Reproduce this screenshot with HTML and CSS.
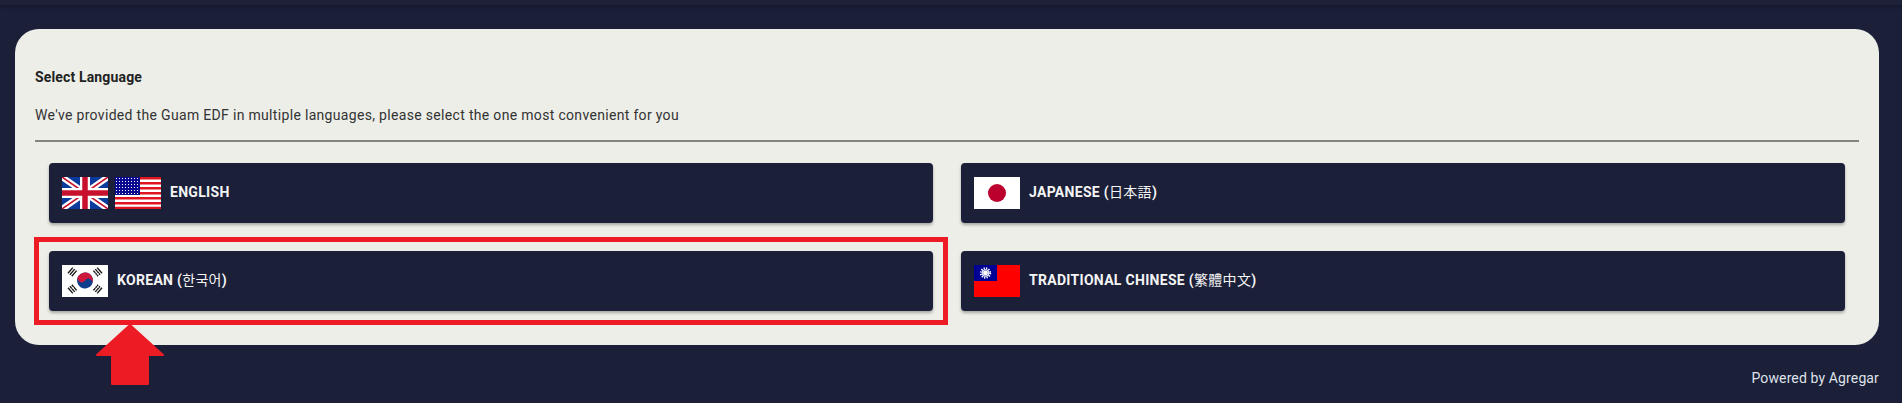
FILE: index.html
```html
<!DOCTYPE html>
<html lang="en">
<head>
    <meta charset="UTF-8">
    <meta name="viewport" content="width=device-width, initial-scale=1.0">
    <title>Select Language</title>
    <link rel="stylesheet" href="styles.css">
</head>
<body>
    <div class="topbar"></div>

    <div class="card">
        <h2 class="card-title">Select Language</h2>
        <p class="card-text">We've provided the Guam EDF in multiple languages, please select the one most convenient for you</p>
        <hr class="divider">

        <div class="language-grid">
            <a class="language-button" href="#">
                <svg class="flag" viewBox="0 0 46 32" preserveAspectRatio="none">
                    <rect width="46" height="32" fill="#0a3a9c"/>
                    <path d="M0 0L46 32M46 0L0 32" stroke="#fff" stroke-width="6"/>
                    <path d="M0 0L46 32M46 0L0 32" stroke="#c8102e" stroke-width="1.6"/>
                    <path d="M23 0V32M0 16H46" stroke="#fff" stroke-width="10"/>
                    <path d="M23 0V32M0 16H46" stroke="#c8102e" stroke-width="5.5"/>
                </svg>
                <svg class="flag" viewBox="0 0 46 32" preserveAspectRatio="none">
                    <defs>
                        <pattern id="stars" width="3" height="3" patternUnits="userSpaceOnUse">
                            <rect width="1" height="1" x="1" y="1" fill="#fff"/>
                        </pattern>
                    </defs>
                    <rect width="46" height="32" fill="#fff"/>
                    <path d="M0 1.2H46M0 6.2H46M0 11.2H46M0 16.2H46M0 21.2H46M0 26.2H46M0 31H46" stroke="#e0141e" stroke-width="2.5"/>
                    <rect width="25" height="18" fill="#0a0a90"/>
                    <rect width="25" height="18" fill="url(#stars)"/>
                </svg>
                <span>ENGLISH</span>
            </a>
            <a class="language-button" href="#">
                <svg class="flag" viewBox="0 0 46 32" preserveAspectRatio="none">
                    <rect width="46" height="32" fill="#fff"/>
                    <circle cx="23" cy="16" r="9" fill="#bc002d"/>
                </svg>
                <span>JAPANESE (<span class="native" lang="ja">日本語</span>)</span>
            </a>
            <a class="language-button" href="#">
                <svg class="flag" viewBox="0 0 46 32" preserveAspectRatio="none">
                    <rect width="46" height="32" fill="#fff"/>
                    <g transform="rotate(33.7 23 15.500)">
                        <circle cx="23" cy="15.500" r="8" fill="#0f3f8c"/>
                        <path d="M15 15.500A4 4 0 0 0 23 15.500A4 4 0 0 1 31 15.500A8 8 0 0 0 15 15.500Z" fill="#cd1a3c"/>
                    </g>
                    <g stroke="#1c1c1c" stroke-width="1.400">
                        <path d="M6 8.300L10.800 2.600M7.900 9.800L12.700 4.100M9.800 11.300L14.600 5.600"/>
                        <path d="M40 8.300L35.200 2.600M38.100 9.800L33.300 4.100M36.200 11.300L31.400 5.600"/>
                        <path d="M6 22.700L10.800 28.400M7.900 21.200L12.700 26.900M9.800 19.700L14.600 25.400"/>
                        <path d="M40 22.700L35.200 28.400M38.100 21.200L33.300 26.900M36.200 19.700L31.400 25.400"/>
                    </g>
                    <path d="M32.300 8.900L35.300 6.500M34.200 10.400L37.200 8M9 24.500L12 22.100M32.300 22.100L35.300 24.500M34.200 20.600L37.200 23M36.100 19.100L39.100 21.500" stroke="#fff" stroke-width=".5"/>
                </svg>
                <span>KOREAN (<span class="native" lang="ko">한국어</span>)</span>
            </a>
            <a class="language-button" href="#">
                <svg class="flag" viewBox="0 0 46 32" preserveAspectRatio="none">
                    <rect width="46" height="32" fill="#fe0000"/>
                    <rect width="23" height="16" fill="#000095"/>
                    <circle cx="11.500" cy="8" r="4.700" fill="none" stroke="#fff" stroke-width="2" stroke-dasharray="1.230 1.230"/>
                    <circle cx="11.500" cy="8" r="3.700" fill="#fff"/>
                    <circle cx="11.500" cy="8" r="2.900" fill="#8f8fd8"/>
                    <circle cx="11.500" cy="8" r="2.300" fill="#fff"/>
                </svg>
                <span>TRADITIONAL CHINESE (<span class="native" lang="zh-TW">繁體中文</span>)</span>
            </a>
        </div>
    </div>

    <div class="footer">Powered by Agregar</div>

    <!-- screenshot annotation on top of the Korean button -->
    <div class="highlight-box"></div>
    <svg class="highlight-arrow" viewBox="0 0 70 62">
        <path d="M35 1L68 31H53V60H17V31H2Z" fill="#ed1c24" stroke="#ed1c24" stroke-width="2" stroke-linejoin="round"/>
    </svg>
</body>
</html>
```

FILE: styles.css
```css
body {
    background-color: #1b1f38;
    font-family: Roboto, "Noto Sans CJK KR", sans-serif;
    font-size: 14px;
    margin: 0;
    height: 403px;
    overflow: hidden;
}

.topbar {
    height: 5px;
    background-color: #1d2139;
    box-shadow: 0 1px 4px rgba(0, 0, 0, 0.35);
}

.card {
    background-color: #edeee8;
    color: #222;
    border-radius: 24px;
    margin: 24px 23px 0 15px;
    padding: 38px 20px 20px;
}

.card-title {
    font-size: 14px;
    font-weight: 700;
    line-height: 20px;
    letter-spacing: 0.15px;
    margin: 0;
}

.card-text {
    line-height: 20px;
    letter-spacing: 0.32px;
    margin: 18px 0 15px;
    color: #333;
}

.divider {
    border: none;
    height: 2px;
    background-color: #85857d;
    margin: 0;
}

.language-grid {
    display: grid;
    grid-template-columns: 1fr 1fr;
    gap: 28px;
    padding: 21px 14px 14px;
}

.language-button {
    display: flex;
    align-items: center;
    height: 60px;
    padding: 0 13px;
    box-sizing: border-box;
    background-color: #1b1f38;
    color: #f4f4f4;
    border-radius: 4px;
    box-shadow: 0 2px 3px rgba(0, 0, 0, 0.3);
    font-weight: 700;
    line-height: 20px;
    letter-spacing: 0.3px;
    text-decoration: none;
}

.flag {
    width: 46px;
    height: 32px;
    margin-right: 7px;
    flex-shrink: 0;
}

.flag + span {
    margin: 0 0 2px 2px;
}

.native {
    font-weight: 400;
    line-height: 1;
}

.native:lang(ja) {
    font-family: "Noto Sans CJK JP", sans-serif;
}

.native:lang(ko) {
    font-family: "Noto Sans CJK KR", sans-serif;
}

.native:lang(zh-TW) {
    font-family: "Noto Sans CJK TC", sans-serif;
}

.footer {
    color: #dfe2ea;
    text-align: right;
    line-height: 20px;
    letter-spacing: 0.13px;
    margin: 23px 23px 0 0;
}

.highlight-box {
    position: absolute;
    left: 34px;
    top: 237px;
    width: 904px;
    height: 78px;
    border: 5px solid #ed1c24;
}

.highlight-arrow {
    position: absolute;
    left: 95px;
    top: 324px;
    width: 70px;
    height: 62px;
}
```
